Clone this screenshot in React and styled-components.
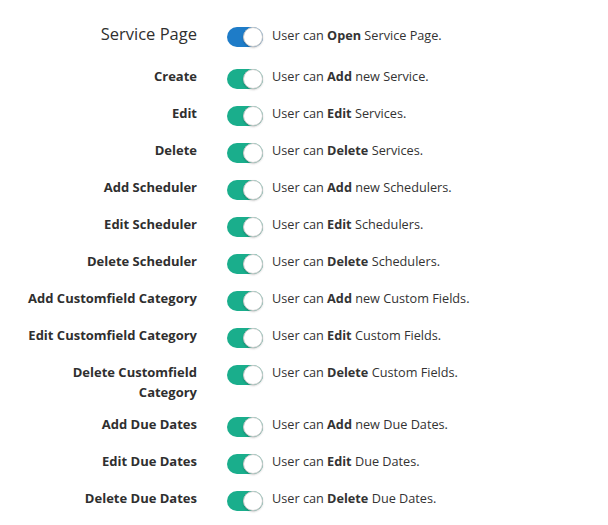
import React from "react";
import styled, { createGlobalStyle } from "styled-components";

const Global = createGlobalStyle`
  body { margin: 0; background: #fff; font-family: "Open Sans", "Noto Sans", sans-serif; color: #333; }
`;

const List = styled.div`
  padding: 24px 0 0 25px;
  display: flex;
  flex-direction: column;
`;

const Row = styled.div`
  display: flex;
  align-items: flex-start;
  margin-bottom: ${(p) => (p.$head ? "18px" : "13px")};
`;

const Label = styled.div`
  width: 172px;
  flex: none;
  text-align: right;
  font-size: ${(p) => (p.$head ? "16.5px" : "13px")};
  font-weight: ${(p) => (p.$head ? 400 : 700)};
  line-height: ${(p) => (p.$head ? "20px" : "19.5px")};
  color: #2f2f2f;
`;

const SwitchWrap = styled.div`
  flex: none;
  height: 24px;
  display: flex;
  align-items: center;
  margin-left: 30px;
  margin-top: ${(p) => (p.$head ? "1px" : "0")};
`;

const Track = styled.div`
  position: relative;
  width: 36px;
  height: 20px;
  border-radius: 10px;
  background: ${(p) => p.$color};
`;

const Knob = styled.div`
  position: absolute;
  right: 0;
  top: 0;
  width: 20px;
  height: 20px;
  box-sizing: border-box;
  border-radius: 50%;
  background: #fff;
  border: 1px solid #c9c9c9;
  box-shadow: 0 1px 2px rgba(0, 0, 0, 0.2);
`;

const Desc = styled.div`
  margin-left: 9px;
  font-size: 12.7px;
  line-height: 19.5px;
  padding-top: ${(p) => (p.$head ? "2px" : "0")};
  color: #333;
  b { font-weight: 700; }
`;

const rows = [
  ["Create", "Add", "new Service."],
  ["Edit", "Edit", "Services."],
  ["Delete", "Delete", "Services."],
  ["Add Scheduler", "Add", "new Schedulers."],
  ["Edit Scheduler", "Edit", "Schedulers."],
  ["Delete Scheduler", "Delete", "Schedulers."],
  ["Add Customfield Category", "Add", "new Custom Fields."],
  ["Edit Customfield Category", "Edit", "Custom Fields."],
  ["Delete Customfield Category", "Delete", "Custom Fields."],
  ["Add Due Dates", "Add", "new Due Dates."],
  ["Edit Due Dates", "Edit", "Due Dates."],
  ["Delete Due Dates", "Delete", "Due Dates."],
];

function Toggle({ color }) {
  return (
    <Track $color={color}>
      <Knob />
    </Track>
  );
}

export default function App() {
  return (
    <>
      <Global />
      <List>
        <Row $head>
          <Label $head>Service Page</Label>
          <SwitchWrap $head>
            <Toggle color="#1e7cc8" />
          </SwitchWrap>
          <Desc $head>
            User can <b>Open</b> Service Page.
          </Desc>
        </Row>
        {rows.map(([label, verb, rest]) => (
          <Row key={label}>
            <Label>{label}</Label>
            <SwitchWrap>
              <Toggle color="#1aae8c" />
            </SwitchWrap>
            <Desc>
              User can <b>{verb}</b> {rest}
            </Desc>
          </Row>
        ))}
      </List>
    </>
  );
}
